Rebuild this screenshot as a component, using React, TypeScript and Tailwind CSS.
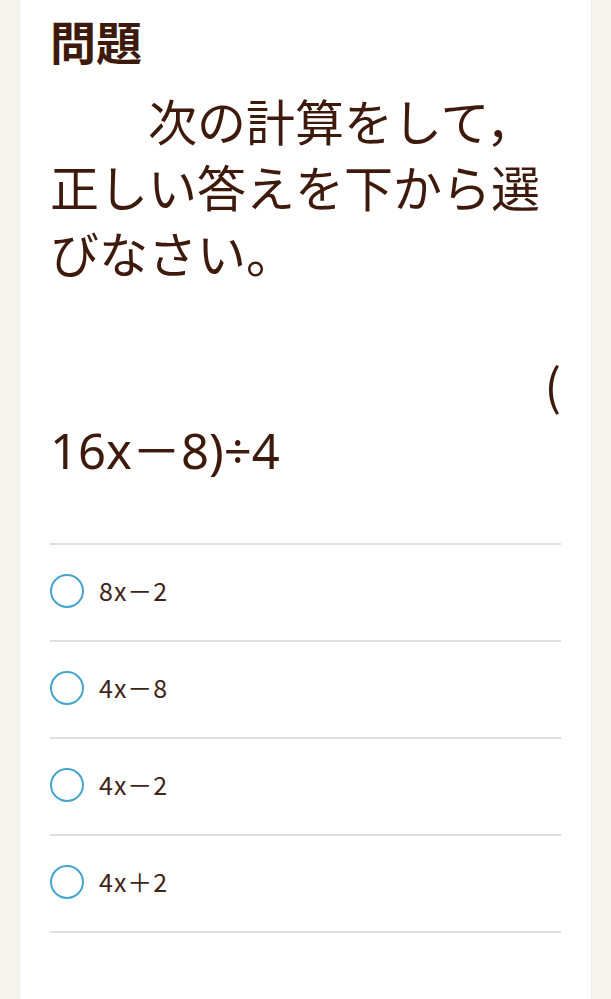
import React from "react";

const options = ["8x－2", "4x－8", "4x－2", "4x＋2"];

export default function App() {
  return (
    <div
      className="min-h-screen bg-[#f4f4ed] px-[20px]"
      style={{ fontFamily: '"Noto Sans CJK JP", "Noto Sans", sans-serif' }}
    >
      <div className="min-h-[999px] bg-white px-[30px] pt-[8px] pb-10 shadow-[0_0_3px_rgba(0,0,0,0.06)]">
        <h2 className="text-[46px] font-bold leading-[64px] text-[#3d1a0c]">問題</h2>

        <div className="mt-[15px] text-[49px] leading-[66px] text-[#3d1a0c]">
          <p className="indent-[2em]">次の計算をして，正しい答えを下から選びなさい。</p>
          <p className="mt-[66px] text-right">(</p>
          <p className="h-[66px]" style={{ fontFamily: '"Noto Sans", "Noto Sans CJK JP", sans-serif' }}>
            16x－8)÷4
          </p>
        </div>

        <ul className="mt-[60px] border-t-2 border-[#dedede]">
          {options.map((opt) => (
            <li key={opt} className="flex h-[97px] items-center border-b-2 border-[#dedede] pb-[4px]">
              <span className="h-[34px] w-[34px] shrink-0 rounded-full border-[2.5px] border-[#45a5d1]" />
              <span className="ml-[15px] text-[25px] tracking-[1px] text-[#3f2418]">{opt}</span>
            </li>
          ))}
        </ul>
      </div>
    </div>
  );
}
